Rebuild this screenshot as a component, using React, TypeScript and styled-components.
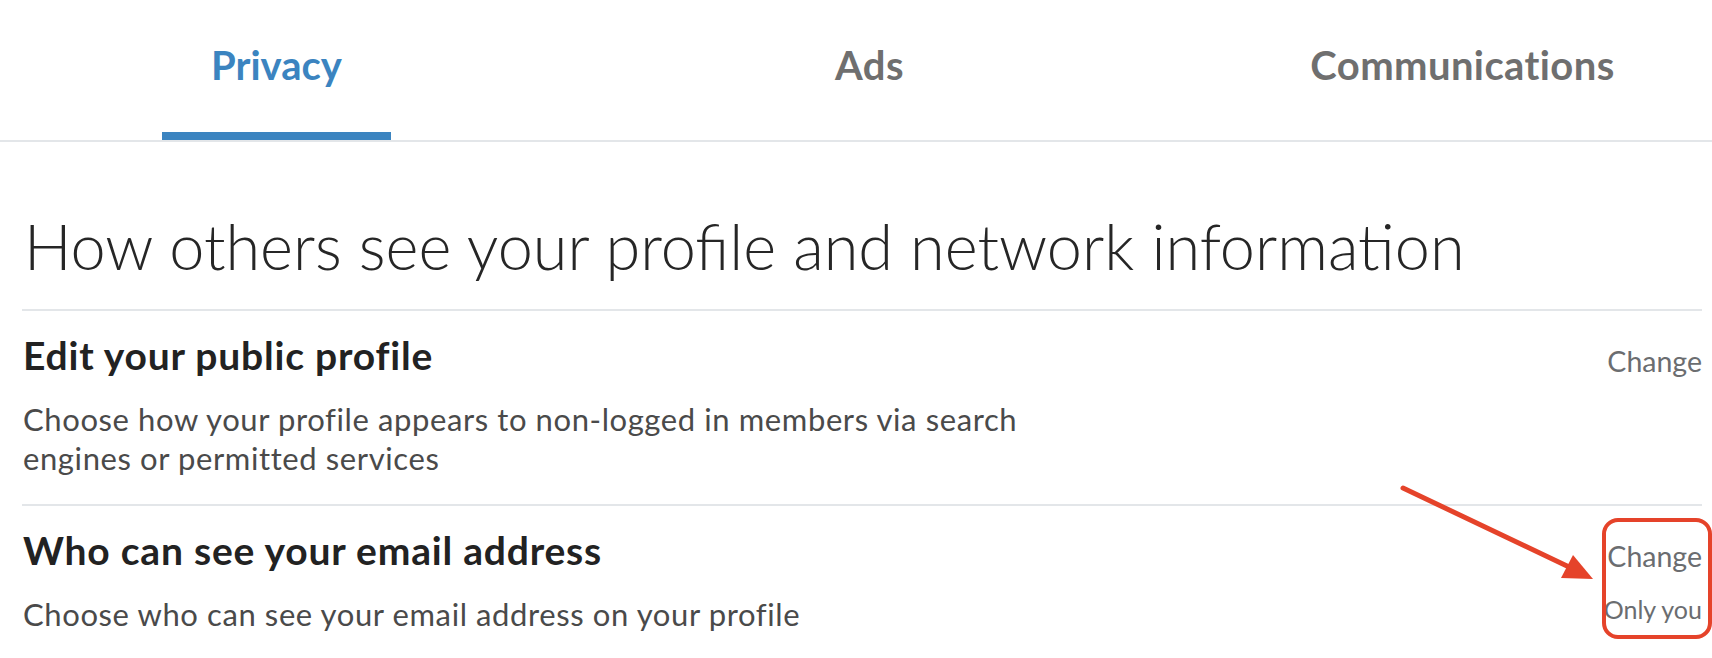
import React from "react";
import styled, { createGlobalStyle } from "styled-components";

const GlobalStyle = createGlobalStyle`
  html, body {
    margin: 0;
    padding: 0;
    background: #ffffff;
  }
  body {
    font-family: Lato, "Noto Sans", "Liberation Sans", sans-serif;
    overflow: hidden;
  }
`;

const Page = styled.div`
  position: relative;
  width: 1712px;
  height: 658px;
  overflow: hidden;
  background: #fff;
`;

const TabBar = styled.nav`
  border-bottom: 2px solid #e3e6e9;
  overflow: hidden;
`;

const TabList = styled.div`
  display: grid;
  grid-template-columns: repeat(3, 593px);
  justify-items: center;
  margin-left: -20px;
`;

const Tab = styled.div<{ $active?: boolean }>`
  box-sizing: border-box;
  height: 140px;
  padding: 45px 49px 0;
  font-size: 40px;
  line-height: 40px;
  font-weight: 700;
  letter-spacing: ${(p) => (p.$active ? "0" : "0.4px")};
  color: ${(p) => (p.$active ? "#3b84c0" : "#6f6f6f")};
  border-bottom: 8px solid ${(p) => (p.$active ? "#3b84c0" : "transparent")};
  white-space: nowrap;
`;

const Content = styled.main`
  margin: 0 10px 0 22px;
`;

const Heading = styled.h1`
  margin: 66px 0 0;
  padding: 0 0 25px 2px;
  font-size: 63px;
  line-height: 76px;
  font-weight: 300;
  color: #262626;
  white-space: nowrap;
`;

const Row = styled.section`
  position: relative;
  display: flex;
  justify-content: space-between;
  border-top: 2px solid #e3e6e9;
  padding: 21px 0 26px 1px;
`;

const RowText = styled.div`
  display: flex;
  flex-direction: column;
  gap: 22px;
`;

const RowTitle = styled.h2`
  margin: 0;
  font-size: 39px;
  line-height: 46px;
  font-weight: 700;
  letter-spacing: 0.8px;
  color: #222222;
`;

const RowDesc = styled.p`
  margin: 0;
  max-width: 1010px;
  font-size: 31px;
  line-height: 39px;
  font-weight: 400;
  letter-spacing: 0.6px;
  color: #4a4a4a;
`;

const Actions = styled.div`
  display: flex;
  flex-direction: column;
  align-items: flex-end;
  gap: 16px;
  padding-top: 10px;
`;

const ChangeLink = styled.a`
  font-size: 28.5px;
  line-height: 39px;
  color: #6b6d70;
  text-decoration: none;
`;

const SettingValue = styled.span`
  font-size: 25px;
  line-height: 34px;
  color: #6b6d70;
`;

const Highlight = styled.div`
  position: absolute;
  top: 12px;
  right: -10px;
  width: 110px;
  height: 121px;
  box-sizing: border-box;
  border: 4px solid #e5432a;
  border-radius: 16px;
  pointer-events: none;
`;

const Arrow = styled.svg`
  position: absolute;
  left: 1395px;
  top: 480px;
  width: 210px;
  height: 110px;
  pointer-events: none;
`;

export default function App() {
  return (
    <Page>
      <GlobalStyle />
      <TabBar>
        <TabList>
          <div>
            <Tab $active>Privacy</Tab>
          </div>
          <div>
            <Tab>Ads</Tab>
          </div>
          <div>
            <Tab>Communications</Tab>
          </div>
        </TabList>
      </TabBar>
      <Content>
        <Heading>How others see your profile and network information</Heading>
        <Row>
          <RowText>
            <RowTitle>Edit your public profile</RowTitle>
            <RowDesc>
              Choose how your profile appears to non-logged in members via search engines or
              permitted services
            </RowDesc>
          </RowText>
          <Actions>
            <ChangeLink href="#">Change</ChangeLink>
          </Actions>
        </Row>
        <Row>
          <RowText>
            <RowTitle>Who can see your email address</RowTitle>
            <RowDesc>Choose who can see your email address on your profile</RowDesc>
          </RowText>
          <Actions>
            <ChangeLink href="#">Change</ChangeLink>
            <SettingValue>Only you</SettingValue>
          </Actions>
          <Highlight />
        </Row>
      </Content>
      <Arrow viewBox="0 0 210 110">
        <line x1="8" y1="8" x2="172" y2="86" stroke="#e5432a" strokeWidth="5" strokeLinecap="round" />
        <polygon points="198,99 166,98 178,75" fill="#e5432a" />
      </Arrow>
    </Page>
  );
}
